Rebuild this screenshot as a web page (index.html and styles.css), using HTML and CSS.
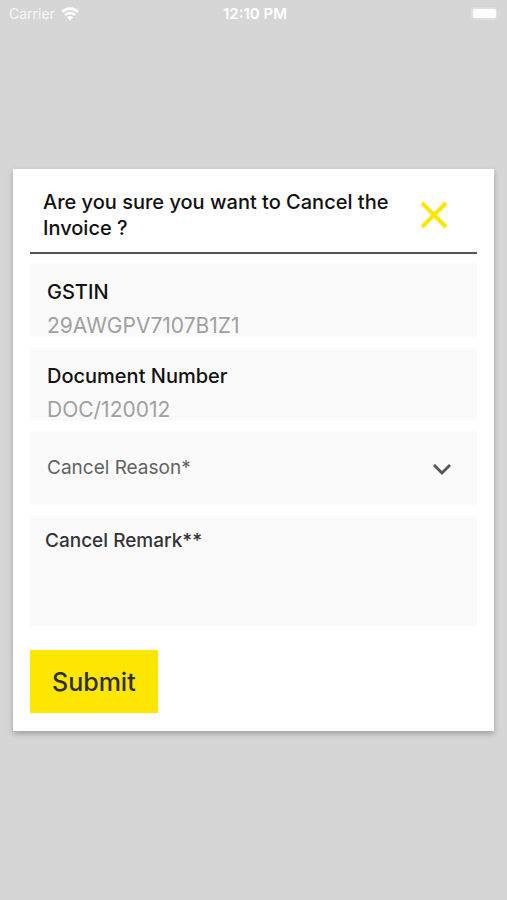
FILE: index.html
```html
<!DOCTYPE html>
<html lang="en">
<head>
<meta charset="utf-8">
<meta name="viewport" content="width=device-width, initial-scale=1">
<title>Cancel Invoice</title>
<link rel="stylesheet" href="styles.css">
</head>
<body>
<header class="status">
  <div class="carrier">
    <span>Carrier</span>
    <svg width="18" height="14" viewBox="0 0 18 14" aria-hidden="true">
      <path d="M1.2 4.8a11.2 11.2 0 0 1 15.6 0M4 8a7.2 7.2 0 0 1 10 0" fill="none" stroke="currentColor" stroke-width="2.6"/>
      <path d="M9 13.6 6 10.5a4.4 4.4 0 0 1 6 0z" fill="currentColor"/>
    </svg>
  </div>
  <time class="clock">12:10 PM</time>
  <svg class="battery" width="31" height="15" viewBox="0 0 31 15" aria-hidden="true">
    <rect x="1" y="1" width="26" height="13" rx="4" fill="#dfdfdf"/>
    <rect x="3" y="3" width="23" height="9" rx="2" fill="#fff"/>
    <path d="M28.5 5.5q2 2 0 4z" fill="#e4e4e4"/>
  </svg>
</header>
<main class="screen">
  <form class="dialog" role="dialog" aria-labelledby="title">
    <div class="head">
      <h1 id="title">Are you sure you want to Cancel the Invoice ?</h1>
      <button class="close" type="button" aria-label="Close">
        <svg width="28" height="28" viewBox="0 0 28 28" aria-hidden="true"><path d="M2 2 26 26M26 2 2 26" fill="none" stroke="currentColor" stroke-width="4"/></svg>
      </button>
    </div>
    <div class="fields">
      <div class="field">
        <label for="gstin">GSTIN</label>
        <input id="gstin" type="text" value="29AWGPV7107B1Z1" readonly>
      </div>
      <div class="field">
        <label for="document">Document Number</label>
        <input id="document" type="text" value="DOC/120012" readonly>
      </div>
      <div class="field reason">
        <select id="reason" aria-label="Cancel Reason">
          <option>Cancel Reason*</option>
        </select>
        <svg width="20" height="13" viewBox="0 0 20 13" aria-hidden="true"><path d="M2 2 10 10 18 2" fill="none" stroke="currentColor" stroke-width="2.8"/></svg>
      </div>
      <div class="field remark">
        <label for="remark">Cancel Remark**</label>
        <textarea id="remark"></textarea>
      </div>
    </div>
    <button class="submit" type="submit">Submit</button>
  </form>
</main>
</body>
</html>
```
FILE: styles.css
```css
* {
  box-sizing: border-box;
}

body {
  margin: 0;
  background: #d6d6d6;
  color: #111;
  font-family: Inter, sans-serif;
}

button,
input,
select,
textarea {
  margin: 0;
  padding: 0;
  border: 0;
  border-radius: 0;
  background: none;
  color: inherit;
  font: inherit;
}

.status {
  position: absolute;
  top: 0;
  left: 0;
  right: 0;
  display: grid;
  grid-template-columns: 1fr auto 1fr;
  align-items: center;
  height: 27px;
  padding: 0 6px 0 9px;
  color: #fff;
  font-size: 14px;
}

.carrier {
  display: flex;
  align-items: center;
  gap: 6px;
}

.carrier span {
  opacity: 0.8;
}

.clock {
  font-size: 15px;
  font-weight: 600;
}

.battery {
  justify-self: end;
}

.screen {
  display: grid;
  align-items: center;
  min-height: 100vh;
  padding: 0 13px;
}

.dialog {
  padding: 20px 17px 18px;
  background: #fff;
  box-shadow: 0 3px 6px rgba(0, 0, 0, 0.25);
}

.head {
  display: flex;
  align-items: center;
  justify-content: space-between;
  padding: 0 29px 11px 13px;
  border-bottom: 2px solid #555;
}

h1 {
  margin: 0;
  font-size: 20px;
  font-weight: 500;
  line-height: 26px;
}

.close {
  display: grid;
  flex: none;
  color: #ffe600;
  cursor: pointer;
}

.fields {
  display: grid;
  gap: 10px;
  padding: 9px 0 24px;
}

.field {
  display: flex;
  flex-direction: column;
  height: 74px;
  padding: 13px 17px 0;
  background: #fafafa;
  font-size: 20px;
  line-height: 32px;
}

.field label {
  font-weight: 500;
}

.field input {
  flex: none;
  width: 100%;
  height: 34px;
  color: #a0a0a0;
  font-size: 21px;
}

.field.reason {
  position: relative;
  padding: 0;
  color: #626262;
  font-size: 19px;
}

.reason select {
  width: 100%;
  height: 100%;
  padding: 0 17px;
  appearance: none;
}

.reason svg {
  position: absolute;
  top: 32px;
  right: 25px;
  color: #555;
  pointer-events: none;
}

.field.remark {
  height: 111px;
  padding: 10px 15px;
  color: #333338;
  font-size: 19px;
}

.remark textarea {
  flex: 1;
  resize: none;
}

.submit {
  display: block;
  height: 63px;
  padding: 0 22px;
  background: #ffe600;
  color: #2e2e38;
  font-size: 25px;
  font-weight: 500;
}
```
